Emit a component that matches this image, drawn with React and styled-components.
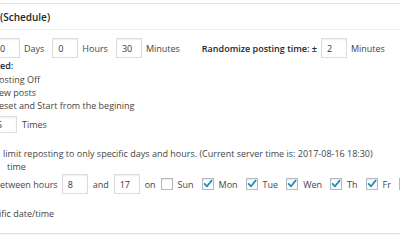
import React from "react";
import styled, { createGlobalStyle } from "styled-components";

const Global = createGlobalStyle`
  html, body { margin: 0; padding: 0; background: #fff; }
  body {
    width: 400px; height: 250px; overflow: hidden;
    font-family: "Open Sans", "Noto Sans", sans-serif;
    font-size: 9px; color: #444;
  }
`;

const Panel = styled.div`
  margin-top: 3px;
  border-top: 1px solid #e5e5e5;
  border-bottom: 1px solid #e5e5e5;
  box-shadow: 0 1px 1px rgba(0,0,0,0.04);
  height: 231px;
  box-sizing: border-box;
`;

const Header = styled.div`
  height: 25px;
  border-bottom: 1px solid #eee;
  display: flex;
  align-items: center;
  font-size: 10px;
  font-weight: 600;
  color: #23282d;
`;

const Body = styled.div`
  padding-top: 8px;
  display: flex;
  flex-direction: column;
`;

const Row = styled.div`
  display: flex;
  align-items: center;
  gap: ${(p) => p.$gap ?? 4}px;
  margin-left: ${(p) => p.$shift ?? 0}px;
  margin-top: ${(p) => p.$top ?? 0}px;
  white-space: nowrap;
`;

const Line = styled.div`
  height: 13px;
  line-height: 13px;
  white-space: nowrap;
  margin-left: ${(p) => p.$shift ?? 0}px;
  margin-top: ${(p) => p.$top ?? 0}px;
  font-weight: ${(p) => (p.$bold ? 600 : 400)};
  color: ${(p) => (p.$bold ? "#23282d" : "#444")};
`;

const Input = styled.div`
  width: 26px;
  height: ${(p) => p.$h ?? 20}px;
  box-sizing: border-box;
  border: 1px solid #ddd;
  box-shadow: inset 0 1px 2px rgba(0,0,0,0.07);
  padding-left: 5px;
  display: flex;
  align-items: center;
  color: #32373c;
  background: #fff;
  flex: none;
`;

const Label = styled.span`
  margin-left: ${(p) => p.$ml ?? 0}px;
  margin-right: ${(p) => p.$mr ?? 0}px;
`;

const Bold = styled.span`
  font-weight: 600;
  color: #23282d;
  margin-left: ${(p) => p.$ml ?? 0}px;
`;

const Box = styled.span`
  width: 12px;
  height: 12px;
  box-sizing: border-box;
  border: 1px solid #b4b9be;
  box-shadow: inset 0 1px 2px rgba(0,0,0,0.1);
  display: inline-flex;
  align-items: center;
  justify-content: center;
  flex: none;
  background: #fff;
`;

const Check = ({ on }) => (
  <Box>
    {on && (
      <svg width="10" height="10" viewBox="0 0 10 10">
        <path d="M1.6 4.8 L4 7.3 L8.6 1.6" fill="none" stroke="#1e8cbe" strokeWidth="1.8" strokeLinecap="round" strokeLinejoin="round" />
      </svg>
    )}
  </Box>
);

const days = [
  ["Sun", false],
  ["Mon", true],
  ["Tue", true],
  ["Wen", true],
  ["Th", true],
  ["Fr", true],
  ["Sa", false],
];

export default function App() {
  return (
    <>
      <Global />
      <Panel>
        <Header>(Schedule)</Header>
        <Body>
          <Row $shift={-6}>
            <Input>0</Input>
            <Label $mr={4}>Days</Label>
            <Input>0</Input>
            <Label $mr={4}>Hours</Label>
            <Input>30</Input>
            <Label>Minutes</Label>
            <Bold $ml={18}>Randomize posting time: ±</Bold>
            <Input>2</Input>
            <Label>Minutes</Label>
          </Row>
          <Line $bold $top={1}>ed:</Line>
          <Line $shift={-1} $top={1}>osting Off</Line>
          <Line $shift={-1}>ew posts</Line>
          <Line $shift={-1}>eset and Start from the begining</Line>
          <Row $shift={-9} $gap={5} $top={4}>
            <Input $h={17}>5</Input>
            <Label>Times</Label>
          </Row>
          <Line $shift={3} $top={14}>limit reposting to only specific days and hours. (Current server time is: 2017-08-16 18:30)</Line>
          <Line $shift={7}>time</Line>
          <Row $gap={5} $top={1}>
            <Label $mr={-1}>etween hours</Label>
            <Input>8</Input>
            <Label>and</Label>
            <Input>17</Input>
            <Label>on</Label>
            {days.map(([d, on]) => (
              <React.Fragment key={d}>
                <Check on={on} />
                <Label $mr={3}>{d}</Label>
              </React.Fragment>
            ))}
          </Row>
          <Line $shift={-1} $top={13}>ific date/time</Line>
        </Body>
      </Panel>
    </>
  );
}
